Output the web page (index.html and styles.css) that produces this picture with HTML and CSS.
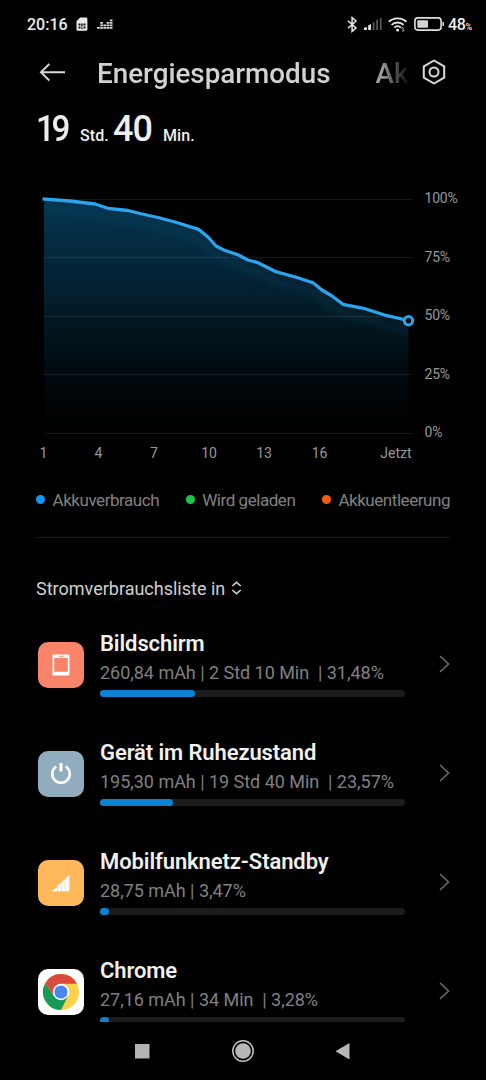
FILE: index.html
```
<!DOCTYPE html>
<html lang="de">
<head>
    <meta charset="UTF-8">
    <meta name="viewport" content="width=device-width, initial-scale=1.0">
    <title>Energiesparmodus</title>
    <link rel="stylesheet" href="styles.css">
</head>
<body>
    <div class="screen">
        <div class="statusbar">
            <span class="time">20:16</span>
            <svg class="sim" width="12" height="15" viewBox="0 0 12 15">
                <path d="M4.2 0.5H10a1.4 1.4 0 0 1 1.4 1.4V12.400a1.400 1.400 0 0 1-1.400 1.400H1.900a1.400 1.400 0 0 1-1.400-1.400V4.200z" fill="#e8e8e8"/>
                <path d="M2.500 6.500h2v2h-2zM5.300 6.500h1.400v3H5.300zM7.500 6.500h2v2h-2zM2.500 9.500h2v2h-2zM5.300 10.500h1.400v1.500H5.300zM7.500 9.500h2v2h-2z" fill="#111"/>
            </svg>
            <svg class="eq" width="16" height="12" viewBox="0 0 16 12">
                <path d="M0 9h2.700v1.800H0zM3.200 9h2.700v1.800H3.200zM6.400 9h2.700v1.800H6.400zM9.600 9h2.700v1.800H9.600zM12.800 9h2.700v1.800h-2.700zM3.200 6.500h2.700v1.800H3.200zM6.400 6.500h2.700v1.800H6.400zM9.600 6.500h2.700v1.800H9.600zM12.800 6.500h2.700v1.800h-2.700zM3.200 4h2.700v1.800H3.200zM9.600 4h2.700v1.800H9.600zM12.800 4h2.700v1.800h-2.700zM12.800 1.500h2.700v1.800h-2.700z" fill="#ddd"/>
            </svg>
            <div class="status-right">
                <svg width="11" height="17" viewBox="0 0 11 17">
                    <path d="M1 4.700l8 7.300-3.900 3.400V1.600L9 5 1 12.300" fill="none" stroke="#e8e8e8" stroke-width="1.500"/>
                </svg>
                <svg class="signal" width="18" height="14" viewBox="0 0 18 14">
                    <path d="M0 13v-2.200l2.800-.8v3zM4.200 13V8.500L6.900 7v6z" fill="#eee"/>
                    <path d="M8.700 13V5.500l1.800-1V13zM12.200 13V3.200l1.800-1V13zM15.800 13V1.500l1.800-1V13z" fill="#555"/>
                </svg>
                <svg class="wifi" width="20" height="16" viewBox="0 0 20 16">
                    <g fill="none" stroke="#e8e8e8" stroke-width="1.900">
                        <path d="M.8 5.800a13 13 0 0 1 17.600 0"/>
                        <path d="M3.600 8.900a8.600 8.600 0 0 1 12 0"/>
                        <path d="M6.300 11.600a4.800 4.800 0 0 1 6.600 0"/>
                    </g>
                    <circle cx="9.600" cy="14" r="1.500" fill="#e8e8e8"/>
                    <path d="M15 11v4.500M13.500 12.500L15 11M15 15.500l1.500-1.500" fill="none" stroke="#aaa"/>
                </svg>
                <svg class="battery" width="31" height="14" viewBox="0 0 31 14">
                    <rect x=".9" y=".9" width="26.200" height="12.200" rx="3" fill="none" stroke="#e0e0e0" stroke-width="1.600"/>
                    <rect x="3.300" y="3.300" width="10.700" height="7.400" rx="1" fill="#d4d4d4"/>
                    <path d="M29.200 5v4" stroke="#e0e0e0" stroke-width="1.500"/>
                </svg>
                <span class="level">48<small>%</small></span>
            </div>
        </div>

        <div class="header">
            <svg class="back" width="27" height="20" viewBox="0 0 27 20">
                <path d="M26 10.200H2M10.300 2L1.900 10.200l8.400 8.300" fill="none" stroke="#d8d8d8" stroke-width="1.900"/>
            </svg>
            <div class="tabs"><span class="tab active">Energiesparmodus</span><span class="tab">Ak</span></div>
            <svg class="settings" width="24" height="26" viewBox="0 0 24 26">
                <path d="M12 1.500l10.200 5.800v11.400L12 24.500 1.800 18.700V7.300z" fill="none" stroke="#dcdcdc" stroke-width="2" stroke-linejoin="round"/>
                <circle cx="12" cy="13" r="4.500" fill="none" stroke="#dcdcdc" stroke-width="2"/>
            </svg>
        </div>

        <div class="remaining">
            <span class="num hours">19</span><span class="unit">Std.</span>
            <span class="num mins">40</span><span class="unit">Min.</span>
        </div>

        <svg class="chart" width="486" height="290" viewBox="0 180 486 290">
            <defs>
                <linearGradient id="area" gradientUnits="userSpaceOnUse" x1="0" y1="199" x2="0" y2="427">
                    <stop offset="0" stop-color="#053550"/>
                    <stop offset=".25" stop-color="#04283d"/>
                    <stop offset=".6" stop-color="#02141c"/>
                    <stop offset=".82" stop-color="#01070c"/>
                    <stop offset="1" stop-color="#000"/>
                </linearGradient>
                <filter id="soft" x="-5%" y="-10%" width="110%" height="120%"><feGaussianBlur stdDeviation="3"/></filter>
                <clipPath id="under">
                    <path d="M44 199L70 201 95 204 108 208.300 128 210.500 140 213.500 158 217.500 175 222 198.500 229.300 208 237 216 246 225 250.500 238 254.700 248 260 258 262.700 275 271.300 297 277.500 313 282.700 322 290 332 296 343 304.300 365 308.700 387 315.700 408.500 320.500V433H44z"/>
                </clipPath>
            </defs>
            <g clip-path="url(#under)">
                <rect x="44" y="195" width="365" height="238" fill="url(#area)"/>
                <path transform="translate(0 10)" d="M30 198L70 201 95 204 108 208.300 128 210.500 140 213.500 158 217.500 175 222 198.500 229.300 208 237 216 246 225 250.500 238 254.700 248 260 258 262.700 275 271.300 297 277.500 313 282.700 322 290 332 296 343 304.300 365 308.700 387 315.700 420 323" fill="none" stroke="#1d5f7d" stroke-opacity=".22" stroke-width="5" filter="url(#soft)"/>
            </g>
            <path class="grid" d="M44 199.500H411M44 257.500H411M44 316.500H411M44 374.500H411M44 433.500H411"/>
            <path class="line" d="M42.500 198.900L70 201 95 204 108 208.300 128 210.500 140 213.500 158 217.500 175 222 198.500 229.300 208 237 216 246 225 250.500 238 254.700 248 260 258 262.700 275 271.300 297 277.500 313 282.700 322 290 332 296 343 304.300 365 308.700 387 315.700 404 319.500"/>
            <circle class="now" cx="408.500" cy="320.700" r="4.200"/>
            <g class="axis">
                <text x="424.500" y="203">100%</text>
                <text x="424.500" y="261.500">75%</text>
                <text x="424.500" y="320">50%</text>
                <text x="424.500" y="378.500">25%</text>
                <text x="424.500" y="437">0%</text>
            </g>
            <g class="axis hours-axis">
                <text x="43.500" y="458">1</text>
                <text x="98.500" y="458">4</text>
                <text x="154" y="458">7</text>
                <text x="209" y="458">10</text>
                <text x="264" y="458">13</text>
                <text x="319.500" y="458">16</text>
                <text x="396" y="458">Jetzt</text>
            </g>
        </svg>

        <div class="legend">
            <span><i class="dot blue"></i>Akkuverbrauch</span>
            <span><i class="dot green"></i>Wird geladen</span>
            <span><i class="dot orange"></i>Akkuentleerung</span>
        </div>

        <div class="list-title">
            <span>Stromverbrauchsliste in</span>
            <svg width="11" height="14" viewBox="0 0 11 14">
                <path d="M1.300 5L5.500 1.300 9.700 5M1.300 9l4.200 3.700L9.700 9" fill="none" stroke="#ccc" stroke-width="1.600"/>
            </svg>
        </div>

        <div class="list">
            <div class="item">
                <svg class="icon" width="46" height="46" viewBox="0 0 46 46">
                    <rect width="46" height="46" rx="10" fill="#fa8469"/>
                    <path fill="#fff" fill-rule="evenodd" d="M15.500 12.500h15a1 1 0 0 1 1 1v19a1 1 0 0 1-1 1h-15a1 1 0 0 1-1-1v-19a1 1 0 0 1 1-1zM16.200 16v13.800h13.600V16zM21 13.700v1h4.500v-1z"/>
                </svg>
                <div class="info">
                    <h3>Bildschirm</h3>
                    <p>260,84 mAh | 2 Std 10 Min&nbsp; | 31,48%</p>
                    <div class="bar"><div class="fill" style="width: 31.1%"></div></div>
                </div>
                <svg class="arrow" width="11" height="18" viewBox="0 0 11 18"><path d="M1 1l8.500 8L1 17"/></svg>
            </div>
            <div class="item">
                <svg class="icon" width="46" height="46" viewBox="0 0 46 46">
                    <rect width="46" height="46" rx="10" fill="#90acbd"/>
                    <path d="M18.300 15.500a8.800 8.800 0 1 0 9.400 0" fill="none" stroke="#fff" stroke-width="2.600"/>
                    <path d="M23 12v8.500" stroke="#fff" stroke-width="3"/>
                </svg>
                <div class="info">
                    <h3>Gerät im Ruhezustand</h3>
                    <p>195,30 mAh | 19 Std 40 Min&nbsp; | 23,57%</p>
                    <div class="bar"><div class="fill" style="width: 24%"></div></div>
                </div>
                <svg class="arrow" width="11" height="18" viewBox="0 0 11 18"><path d="M1 1l8.500 8L1 17"/></svg>
            </div>
            <div class="item">
                <svg class="icon" width="46" height="46" viewBox="0 0 46 46">
                    <rect width="46" height="46" rx="10" fill="#ffb95a"/>
                    <path fill="#fff" d="M14 31.200l5-4v4zM19.500 31.200v-5.400l3.400-2.800v8.200zM23.400 31.200v-8.600l3.400-2.900v11.500zM27.300 31.200V18.800l4-3.500v15.900z"/>
                </svg>
                <div class="info">
                    <h3>Mobilfunknetz-Standby</h3>
                    <p>28,75 mAh | 3,47%</p>
                    <div class="bar"><div class="fill" style="width: 3.1%"></div></div>
                </div>
                <svg class="arrow" width="11" height="18" viewBox="0 0 11 18"><path d="M1 1l8.500 8L1 17"/></svg>
            </div>
            <div class="item">
                <svg class="icon" width="46" height="46" viewBox="0 0 46 46">
                    <rect width="46" height="46" rx="10" fill="#fff"/>
                    <circle cx="23" cy="23" r="18" fill="#fdd148"/>
                    <path d="M23 23L15.900 27.100 7.400 14A18 18 0 0 0 23 41L30.100 27.100z" fill="#169a5a"/>
                    <path d="M23 14.800H38.900A18 18 0 0 0 7.400 14L15.900 27.100 23 23z" fill="#da4a3d"/>
                    <circle cx="23" cy="23" r="8.200" fill="#fff"/>
                    <circle cx="23" cy="23" r="6.600" fill="#4a87ee"/>
                </svg>
                <div class="info">
                    <h3>Chrome</h3>
                    <p>27,16 mAh | 34 Min&nbsp; | 3,28%</p>
                    <div class="bar"><div class="fill" style="width: 3.1%"></div></div>
                </div>
                <svg class="arrow" width="11" height="18" viewBox="0 0 11 18"><path d="M1 1l8.500 8L1 17"/></svg>
            </div>
        </div>

        <div class="navbar">
            <svg width="15" height="24" viewBox="0 0 15 24"><rect y="5" width="14.500" height="14.500" fill="#b5b5b5"/></svg>
            <svg width="24" height="24" viewBox="0 0 24 24">
                <circle cx="12" cy="12" r="10.200" fill="none" stroke="#c0c0c0" stroke-width="1.500"/>
                <circle cx="12" cy="12" r="7.800" fill="#b8b8b8"/>
            </svg>
            <svg width="15" height="24" viewBox="0 0 15 24"><path d="M14.500 4v16.500L.5 12.200z" fill="#b8b8b8"/></svg>
        </div>
    </div>
</body>
</html>
```
FILE: styles.css
```
* {
    box-sizing: border-box;
}
body {
    margin: 0;
    background: #000;
    color: #fff;
    font-family: Roboto, 'Liberation Sans', sans-serif;
}
svg {
    display: block;
    flex-shrink: 0;
}
.screen {
    width: 486px;
    height: 1080px;
    display: flex;
    flex-direction: column;
    overflow: hidden;
}
.statusbar {
    height: 46px;
    flex-shrink: 0;
    display: flex;
    align-items: center;
    padding: 2px 14px 0 27px;
    font-size: 16px;
    font-weight: 500;
    color: #eee;
}
.time {
    width: 49px;
}
.eq {
    margin: 0 0 0 9px;
}
.status-right {
    margin-left: auto;
    display: flex;
    align-items: center;
}
.signal {
    margin-left: 6px;
}
.wifi {
    margin-left: 6px;
}
.battery {
    margin-left: 6px;
}
.level {
    margin-left: 3px;
    width: 24px;
    white-space: nowrap;
    letter-spacing: -0.4px;
}
.level small {
    font-size: 9px;
}
.header {
    height: 54px;
    flex-shrink: 0;
    display: flex;
    align-items: center;
    padding: 0 40px 2px 39px;
}
.tabs {
    width: 313px;
    margin-left: 31px;
    display: flex;
    gap: 45px;
    white-space: nowrap;
    font-size: 27.8px;
    font-weight: 500;
    line-height: 36px;
    color: #9a9a9a;
    padding-top: 3px;
    mask-image: linear-gradient(to right, #000 285px, transparent 313px);
}
.tab.active {
    color: #d2d2d2;
}
.settings {
    margin-left: auto;
}
.remaining {
    height: 80px;
    flex-shrink: 0;
    display: flex;
    align-items: baseline;
    padding: 8px 36px 0;
    color: #eee;
}
.num {
    font-size: 36px;
    font-weight: 500;
    line-height: 42px;
    letter-spacing: -1px;
}
.hours {
    width: 44px;
    letter-spacing: -3.5px;
    transform: scaleX(0.92);
    transform-origin: left;
}
.mins {
    width: 50px;
}
.unit {
    font-size: 16px;
    font-weight: 500;
    letter-spacing: 0.1px;
}
.hours + .unit {
    width: 33px;
}
.chart {
    width: 486px;
    height: 290px;
}
.grid {
    fill: none;
    stroke: #fff;
    stroke-opacity: 0.17;
    stroke-dasharray: 1 1;
}
.line {
    fill: none;
    stroke: #2ba5ee;
    stroke-width: 3.3;
    stroke-linejoin: round;
}
.now {
    fill: #000;
    stroke: #2ba5ee;
    stroke-width: 3;
}
.axis {
    font-size: 14px;
    letter-spacing: -0.2px;
    fill: #999;
}
.hours-axis {
    text-anchor: middle;
    letter-spacing: 0;
}
.legend {
    display: flex;
    justify-content: space-between;
    flex-shrink: 0;
    height: 68px;
    margin: 0 36px;
    padding-top: 20px;
    border-bottom: 1px solid #1a1a1a;
    font-size: 17px;
    letter-spacing: -0.45px;
    line-height: 21px;
    color: #808080;
}
.legend span {
    display: flex;
}
.dot {
    width: 9px;
    height: 9px;
    margin: 5px 7.5px 0 0;
    border-radius: 50%;
}
.blue {
    background: #1496f5;
}
.green {
    background: #16c84b;
}
.orange {
    background: #fb5a12;
}
.list-title {
    display: flex;
    align-items: center;
    gap: 6px;
    height: 22px;
    flex-shrink: 0;
    margin: 39px 36px 33px;
    font-size: 18px;
    color: #d0d0d0;
}
.list {
    height: 389.5px;
    flex-shrink: 0;
    overflow: hidden;
}
.item {
    height: 109px;
    display: flex;
    padding: 0 36px 0 38px;
}
.icon {
    margin-top: 10px;
}
.info {
    width: 305px;
    margin-left: 16px;
}
.info h3 {
    margin: 0;
    font-size: 22px;
    font-weight: 600;
    letter-spacing: -0.1px;
    line-height: 24px;
    color: #f0f0f0;
}
.info p {
    margin: 6px 0 0;
    font-size: 18px;
    letter-spacing: -0.03px;
    line-height: 22px;
    color: #808080;
    white-space: nowrap;
}
.bar {
    height: 7px;
    margin-top: 6px;
    border-radius: 4px;
    background: #1c1c1c;
}
.fill {
    height: 7px;
    border-radius: 4px;
    background: #0b82d2;
}
.arrow {
    margin: 23px 0 0 auto;
}
.arrow path {
    fill: none;
    stroke: #707070;
    stroke-width: 1.5;
}
.navbar {
    flex: 1;
    display: flex;
    justify-content: space-between;
    padding: 17px 136px 0 135px;
}
```
